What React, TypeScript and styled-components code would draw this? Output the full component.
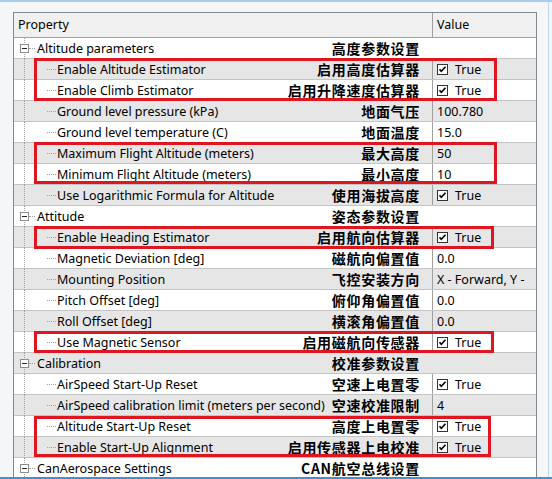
import React from 'react';
import styled, { createGlobalStyle } from 'styled-components';

const GlobalStyle = createGlobalStyle`
  html, body {
    margin: 0;
    padding: 0;
    background: #f5f6f7;
  }
  body {
    font-family: "Noto Sans", "Noto Sans CJK SC", sans-serif;
    color: #000;
  }
`;

const Window = styled.div`
  width: 552px;
  height: 479px;
  box-sizing: border-box;
  border-top: 2px solid #a9cdef;
  border-bottom: 2px solid #3a92d8;
  padding: 10px 0 0 13px;
  overflow: hidden;
  background: #f5f6f7;
  box-shadow: inset -3px 0 0 #f5f6f7, inset -4px 0 0 #b8d6f2;
`;

const Grid = styled.div`
  position: relative;
  width: 524px;
  box-sizing: border-box;
  border: 1px solid #828790;
  border-bottom: none;
  background: #fff;
`;

const Header = styled.div`
  display: grid;
  grid-template-columns: 418px 104px;
  height: 25px;
  box-sizing: border-box;
  border-bottom: 1px solid #a0a0a0;
  background: #f0f0f0;
`;

const HeaderCell = styled.div<{ $sep?: boolean }>`
  padding-left: 4px;
  line-height: 24px;
  font-size: 12.5px;
  box-sizing: border-box;
  border-left: ${p => (p.$sep ? '1px solid #a0a0a0' : 'none')};
`;

const Row = styled.div<{ $alt: boolean }>`
  display: grid;
  grid-template-columns: 418px 104px;
  height: 21px;
  box-sizing: border-box;
  border-bottom: 1px solid #c4c4c4;
  background: ${p => (p.$alt ? '#e6e6e6' : '#ffffff')};
`;

const NameCell = styled.div<{ $category?: boolean }>`
  position: relative;
  display: flex;
  align-items: center;
  justify-content: space-between;
  padding: 0 12px 0 ${p => (p.$category ? '23px' : '43px')};
  font-size: 12.5px;
  white-space: nowrap;

  &::before {
    content: '';
    position: absolute;
    left: 10px;
    top: 0;
    bottom: -1px;
    border-left: 1px dotted #a0a0a0;
  }

  &::after {
    content: '';
    position: absolute;
    top: 10px;
    left: ${p => (p.$category ? '15px' : '33px')};
    width: ${p => (p.$category ? '6px' : '9px')};
    border-top: 1px dotted #a0a0a0;
  }
`;

const Expander = styled.span`
  position: absolute;
  left: 6px;
  top: 6px;
  width: 9px;
  height: 9px;
  box-sizing: border-box;
  border: 1px solid #8c8c8c;
  background: #fff;
  z-index: 1;

  &::after {
    content: '';
    position: absolute;
    left: 1px;
    top: 3px;
    width: 5px;
    height: 1px;
    background: #222;
  }
`;

const Label = styled.span`
  font-family: "Noto Sans CJK SC", sans-serif;
  font-weight: 700;
  font-size: 14px;
  letter-spacing: 0.7px;
`;

const ValueCell = styled.div<{ $sep: boolean }>`
  display: flex;
  align-items: center;
  gap: 7px;
  padding-left: 4px;
  box-sizing: border-box;
  border-left: ${p => (p.$sep ? '1px solid #a0a0a0' : '1px solid transparent')};
  font-size: 12.5px;
  white-space: nowrap;
  overflow: hidden;
`;

const Highlight = styled.div<{ $left: number; $top: number; $w: number; $h: number }>`
  position: absolute;
  left: ${p => p.$left}px;
  top: ${p => p.$top}px;
  width: ${p => p.$w}px;
  height: ${p => p.$h}px;
  box-sizing: border-box;
  border: 3px solid #df1620;
  pointer-events: none;
`;

const Check = () => (
  <svg width="11" height="11" viewBox="0 0 11 11">
    <rect x="0.5" y="0.5" width="10" height="10" fill="#fff" stroke="#333" />
    <path d="M2.5 5.2 L4.3 7.3 L8.5 2.8" fill="none" stroke="#000" strokeWidth="1.6" />
  </svg>
);

type Item = { name: string; label: string; category?: boolean; value?: string; check?: boolean };

const items: Item[] = [
  { name: 'Altitude parameters', label: '高度参数设置', category: true },
  { name: 'Enable Altitude Estimator', label: '启用高度估算器', check: true },
  { name: 'Enable Climb Estimator', label: '启用升降速度估算器', check: true },
  { name: 'Ground level pressure (kPa)', label: '地面气压', value: '100.780' },
  { name: 'Ground level temperature (C)', label: '地面温度', value: '15.0' },
  { name: 'Maximum Flight Altitude (meters)', label: '最大高度', value: '50' },
  { name: 'Minimum Flight Altitude (meters)', label: '最小高度', value: '10' },
  { name: 'Use Logarithmic Formula for Altitude', label: '使用海拔高度', check: true },
  { name: 'Attitude', label: '姿态参数设置', category: true },
  { name: 'Enable Heading Estimator', label: '启用航向估算器', check: true },
  { name: 'Magnetic Deviation [deg]', label: '磁航向偏置值', value: '0.0' },
  { name: 'Mounting Position', label: '飞控安装方向', value: 'X - Forward, Y -' },
  { name: 'Pitch Offset [deg]', label: '俯仰角偏置值', value: '0.0' },
  { name: 'Roll Offset [deg]', label: '横滚角偏置值', value: '0.0' },
  { name: 'Use Magnetic Sensor', label: '启用磁航向传感器', check: true },
  { name: 'Calibration', label: '校准参数设置', category: true },
  { name: 'AirSpeed Start-Up Reset', label: '空速上电置零', check: true },
  { name: 'AirSpeed calibration limit (meters per second)', label: '空速校准限制', value: '4' },
  { name: 'Altitude Start-Up Reset', label: '高度上电置零', check: true },
  { name: 'Enable Start-Up Alignment', label: '启用传感器上电校准', check: true },
  { name: 'CanAerospace Settings', label: 'CAN航空总线设置', category: true },
];

const highlights = [
  { left: 20, top: 45, w: 463, h: 43 },
  { left: 20, top: 129, w: 463, h: 42 },
  { left: 20, top: 213, w: 460, h: 23 },
  { left: 20, top: 318, w: 460, h: 22 },
  { left: 20, top: 403, w: 457, h: 41 },
];

export default function App() {
  return (
    <>
      <GlobalStyle />
      <Window>
        <Grid>
          <Header>
            <HeaderCell>Property</HeaderCell>
            <HeaderCell $sep>Value</HeaderCell>
          </Header>
          {items.map((it, i) => (
            <Row key={it.name} $alt={i % 2 === 1}>
              <NameCell $category={it.category}>
                {it.category && <Expander />}
                <span>{it.name}</span>
                <Label>{it.label}</Label>
              </NameCell>
              <ValueCell $sep={!it.category}>
                {it.check && <Check />}
                {it.check ? 'True' : it.value}
              </ValueCell>
            </Row>
          ))}
          {highlights.map((h, i) => (
            <Highlight key={i} $left={h.left} $top={h.top} $w={h.w} $h={h.h} />
          ))}
        </Grid>
      </Window>
    </>
  );
}
